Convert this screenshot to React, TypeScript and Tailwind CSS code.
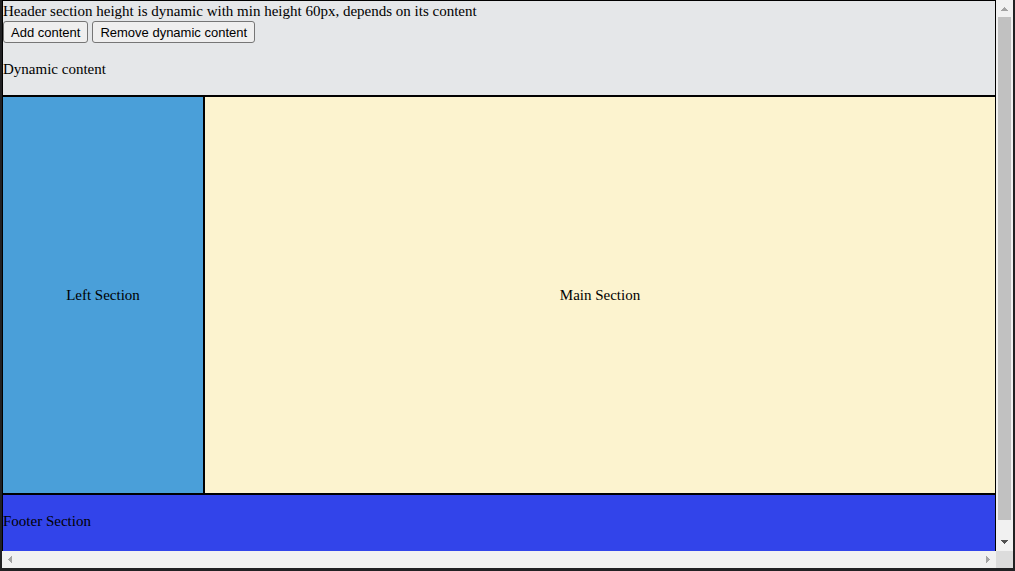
import { useState } from "react";

const buttonClass =
  "h-[22px] rounded-[3px] border border-[#767676] bg-[#efefef] px-[7px] pt-[2px] font-['Liberation_Sans',Arial,sans-serif] text-[13px] leading-[18px] text-black";

const arrowButtonClass = "flex h-[17px] w-[17px] shrink-0 items-center justify-center";

function VerticalScrollbar() {
  return (
    <div className="flex min-h-0 flex-col items-center bg-[#f1f1f1]">
      <button type="button" aria-label="Scroll up" className={`${arrowButtonClass} pt-px`}>
        <svg width="7" height="4" viewBox="0 0 7 4" shapeRendering="crispEdges" fill="#a3a3a3">
          <path d="M3 0h1v1h1v1h1v1h1v1H0V3h1V2h1V1h1z" />
        </svg>
      </button>
      <div className="min-h-0 w-[13px] flex-1 pb-[14px]">
        <div className="h-full bg-[#c1c1c1]" />
      </div>
      <button type="button" aria-label="Scroll down" className={`${arrowButtonClass} pb-px`}>
        <svg width="7" height="4" viewBox="0 0 7 4" shapeRendering="crispEdges" fill="#505050">
          <path d="M0 0h7v1H6v1H5v1H4v1H3V3H2V2H1V1H0z" />
        </svg>
      </button>
    </div>
  );
}

function HorizontalScrollbar() {
  return (
    <div className="flex items-center justify-between bg-[#f1f1f1]">
      <button type="button" aria-label="Scroll left" className={`${arrowButtonClass} pr-px`}>
        <svg width="4" height="7" viewBox="0 0 4 7" shapeRendering="crispEdges" fill="#a3a3a3">
          <path d="M0 3h1V2h1V1h1V0h1v7H3V6H2V5H1V4H0z" />
        </svg>
      </button>
      <button type="button" aria-label="Scroll right" className={`${arrowButtonClass} pl-px`}>
        <svg width="4" height="7" viewBox="0 0 4 7" shapeRendering="crispEdges" fill="#a3a3a3">
          <path d="M4 3H3V2H2V1H1V0H0v7h1V6h1V5h1V4h1z" />
        </svg>
      </button>
    </div>
  );
}

export default function App() {
  const [items, setItems] = useState(["Dynamic content"]);

  return (
    <div className="grid h-screen grid-cols-[minmax(0,1fr)_17px] grid-rows-[minmax(0,1fr)_17px] bg-[#212123] px-[2px] pb-[3px] font-['Liberation_Serif','Times_New_Roman',serif] text-[15px] leading-[18px] text-black">
      <div className="flex min-h-0 flex-col overflow-hidden border-x border-t border-black">
        <header className="min-h-[60px] shrink-0 border-b-2 border-black bg-[#e5e7e9] pt-px">
          <p className="pb-px">
            Header section height is dynamic with min height 60px, depends on its content
          </p>
          <div className="flex gap-1">
            <button
              type="button"
              className={buttonClass}
              onClick={() => setItems([...items, "Dynamic content"])}
            >
              Add content
            </button>
            <button
              type="button"
              className={buttonClass}
              onClick={() => setItems(items.slice(0, -1))}
            >
              Remove dynamic content
            </button>
          </div>
          {items.map((item, index) => (
            <p key={index} className="py-[17px]">
              {item}
            </p>
          ))}
        </header>
        <div className="flex min-h-0 flex-1">
          <aside className="flex w-[202px] shrink-0 items-center justify-center border-r-2 border-black bg-[#4a9fd9]">
            Left Section
          </aside>
          <main className="flex flex-1 items-center justify-center bg-[#fcf3cf]">Main Section</main>
        </div>
        <footer className="shrink-0 border-t-2 border-black bg-[#3244ea] pt-[17px] pb-[21px]">
          Footer Section
        </footer>
      </div>
      <VerticalScrollbar />
      <HorizontalScrollbar />
      <div className="bg-[#dcdcdc]" />
    </div>
  );
}
